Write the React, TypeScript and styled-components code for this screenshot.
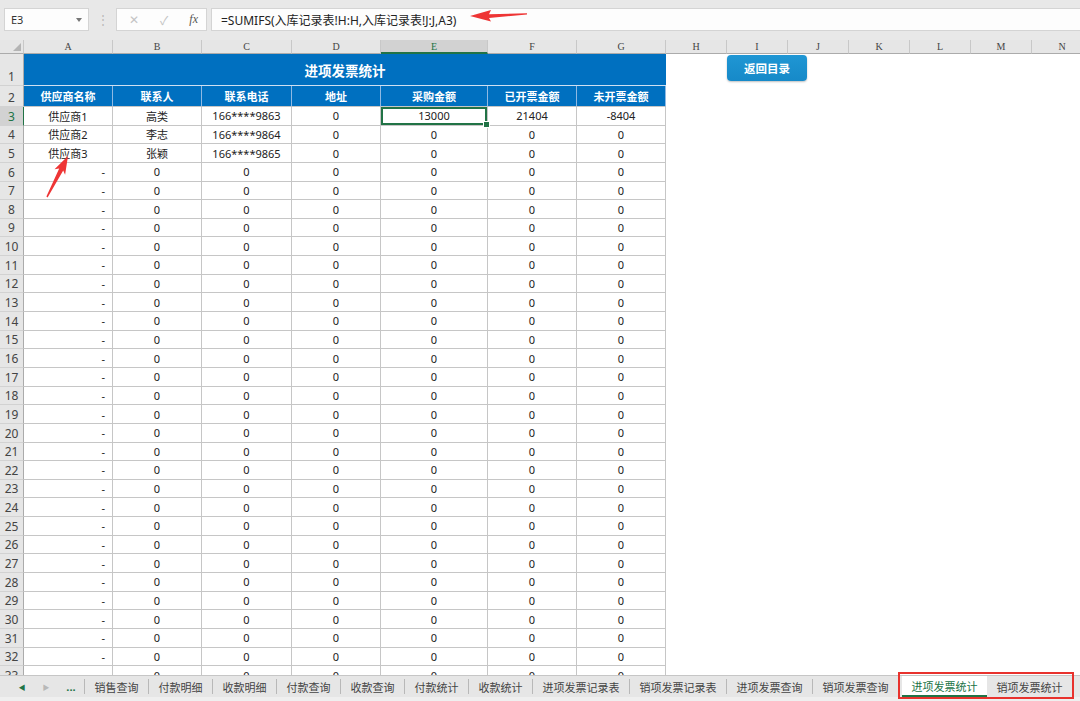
import React from "react";
import styled, { createGlobalStyle, css } from "styled-components";

const COLS = [24, 89, 89, 90, 89, 107, 89, 89, 61, 61, 61, 61, 61, 61, 61];
const LETTERS = ["A", "B", "C", "D", "E", "F", "G", "H", "I", "J", "K", "L", "M", "N"];
const TABLE_COLS = 7;
const ROW_H = 18.65;
const GREEN = "#217346";
const BLUE = "#0070c0";

const HEADERS = ["供应商名称", "联系人", "联系电话", "地址", "采购金额", "已开票金额", "未开票金额"];

const rows: string[][] = [
    ["供应商1", "高类", "166****9863", "0", "13000", "21404", "-8404"],
    ["供应商2", "李志", "166****9864", "0", "0", "0", "0"],
    ["供应商3", "张颖", "166****9865", "0", "0", "0", "0"],
];
for (let i = 6; i <= 33; i++) rows.push(["-", "0", "0", "0", "0", "0", "0"]);

const tabs = [
    "销售查询",
    "付款明细",
    "收款明细",
    "付款查询",
    "收款查询",
    "付款统计",
    "收款统计",
    "进项发票记录表",
    "销项发票记录表",
    "进项发票查询",
    "销项发票查询",
    "进项发票统计",
    "销项发票统计",
];
const ACTIVE_TAB = "进项发票统计";

const GlobalStyle = createGlobalStyle`
    html, body {
        margin: 0;
        padding: 0;
        background: #fff;
    }
    body {
        font-family: "Noto Sans", "Noto Sans CJK SC", sans-serif;
        color: #222;
    }
`;

export default function App() {
    return (
        <>
            <GlobalStyle />
            <Page>
                <Toolbar>
                    <NameBox>
                        <span>E3</span>
                        <DropArrow />
                    </NameBox>
                    <Grip>⋮</Grip>
                    <FxBox>
                        <FxIcon $dim>✕</FxIcon>
                        <FxIcon $dim>✓</FxIcon>
                        <FxLabel>fx</FxLabel>
                    </FxBox>
                    <FormulaBox>=SUMIFS(入库记录表!H:H,入库记录表!J:J,A3)</FormulaBox>
                </Toolbar>

                <Sheet>
                    <GridRow $h={14}>
                        <Corner>
                            <CornerMark />
                        </Corner>
                        {LETTERS.map((l) => (
                            <ColHead key={l} $selected={l === "E"}>
                                {l}
                            </ColHead>
                        ))}
                    </GridRow>

                    <GridRow $h={32}>
                        <RowHead>1</RowHead>
                        <TitleCell>进项发票统计</TitleCell>
                        {LETTERS.slice(TABLE_COLS).map((l) => (
                            <Cell key={l} $variant="empty" />
                        ))}
                    </GridRow>

                    <GridRow $h={21}>
                        <RowHead>2</RowHead>
                        {HEADERS.map((h) => (
                            <HeadCell key={h}>{h}</HeadCell>
                        ))}
                        {LETTERS.slice(TABLE_COLS).map((l) => (
                            <Cell key={l} $variant="empty" />
                        ))}
                    </GridRow>

                    {rows.map((r, i) => {
                        const n = i + 3;
                        return (
                            <GridRow key={n} $h={ROW_H}>
                                <RowHead $selected={n === 3}>{n}</RowHead>
                                {r.map((v, c) => (
                                    <Cell
                                        key={c}
                                        $variant="data"
                                        $align={c === 0 && v === "-" ? "right" : "center"}
                                        $active={n === 3 && c === 4}
                                    >
                                        {v}
                                        {n === 3 && c === 4 && <FillHandle />}
                                    </Cell>
                                ))}
                                {LETTERS.slice(TABLE_COLS).map((l) => (
                                    <Cell key={l} $variant="empty" />
                                ))}
                            </GridRow>
                        );
                    })}

                    <BackButton>返回目录</BackButton>
                </Sheet>

                <TabBar>
                    <Nav $on>◀</Nav>
                    <Nav>▶</Nav>
                    <More>...</More>
                    {tabs.map((t) => (
                        <Tab key={t} $active={t === ACTIVE_TAB}>
                            {t}
                        </Tab>
                    ))}
                </TabBar>

                <Marks width="1080" height="701" viewBox="0 0 1080 701">
                    <polygon
                        points="470,16 491,10 489,14.2 527,13.2 527,14.6 489,18 491,21.5"
                        fill="#ee3535"
                    />
                    <polygon
                        points="68,156 65.1,174.7 63.2,170.4 47.6,197.4 46.4,196.6 59.2,168.4 54.5,169.3"
                        fill="#ee3535"
                    />
                    <rect x="899" y="673" width="174" height="25" fill="none" stroke="#e8322d" strokeWidth="2" />
                </Marks>
            </Page>
        </>
    );
}

const Page = styled.div`
    position: relative;
    width: 1080px;
    height: 701px;
    overflow: hidden;
    display: flex;
    flex-direction: column;
    background: #fff;
`;

const Toolbar = styled.div`
    height: 40px;
    flex: none;
    box-sizing: border-box;
    padding: 8px 0 0 4px;
    display: flex;
    align-items: flex-start;
    background: #e8e8e8;
`;

const boxBase = css`
    height: 23px;
    box-sizing: border-box;
    background: #fdfdfd;
    border: 1px solid #d4d4d4;
    display: flex;
    align-items: center;
`;

const NameBox = styled.div`
    ${boxBase};
    width: 85px;
    padding: 0 6px;
    justify-content: space-between;
    font-size: 11px;
    color: #333;
`;

const DropArrow = styled.span`
    width: 0;
    height: 0;
    border-left: 3.5px solid transparent;
    border-right: 3.5px solid transparent;
    border-top: 4px solid #777;
`;

const Grip = styled.div`
    width: 27px;
    height: 23px;
    display: flex;
    align-items: center;
    justify-content: center;
    color: #b8b8b8;
    font-size: 12px;
`;

const FxBox = styled.div`
    ${boxBase};
    width: 91px;
    padding: 0 8px 0 12px;
    justify-content: space-between;
`;

const FxIcon = styled.span<{ $dim?: boolean }>`
    font-size: 12px;
    color: ${(p) => (p.$dim ? "#c4c4c4" : "#555")};
`;

const FxLabel = styled.span`
    font-family: "Liberation Serif", serif;
    font-style: italic;
    font-size: 12px;
    color: #555;
`;

const FormulaBox = styled.div`
    ${boxBase};
    flex: 1;
    margin-left: 4px;
    border-right: none;
    padding-left: 9px;
    font-size: 12px;
    color: #222;
`;

const Sheet = styled.div`
    position: relative;
    flex: 1;
    overflow: hidden;
`;

const GridRow = styled.div<{ $h: number }>`
    display: grid;
    grid-template-columns: ${COLS.map((w) => `${w}px`).join(" ")};
    height: ${(p) => p.$h}px;
`;

const Corner = styled.div`
    position: relative;
    background: #e6e6e6;
    box-sizing: border-box;
    border-right: 1px solid #c8c8c8;
    border-bottom: 1px solid #ababab;
`;

const CornerMark = styled.span`
    position: absolute;
    right: 2px;
    bottom: 2px;
    width: 0;
    height: 0;
    border-left: 8px solid transparent;
    border-bottom: 8px solid #b4b4b4;
`;

const ColHead = styled.div<{ $selected?: boolean }>`
    box-sizing: border-box;
    display: flex;
    align-items: center;
    justify-content: center;
    font-family: "Liberation Serif", serif;
    font-size: 10px;
    color: ${(p) => (p.$selected ? GREEN : "#444")};
    background: ${(p) => (p.$selected ? "#d2d2d2" : "#e6e6e6")};
    border-right: 1px solid #c8c8c8;
    border-bottom: ${(p) => (p.$selected ? `2px solid ${GREEN}` : "1px solid #ababab")};
`;

const RowHead = styled.div<{ $selected?: boolean }>`
    box-sizing: border-box;
    display: flex;
    align-items: flex-end;
    justify-content: center;
    padding-bottom: 1px;
    font-size: 12px;
    line-height: 14px;
    color: ${(p) => (p.$selected ? GREEN : "#444")};
    background: ${(p) => (p.$selected ? "#d2d2d2" : "#e6e6e6")};
    border-right: 1px solid ${(p) => (p.$selected ? GREEN : "#ababab")};
    border-bottom: 1px solid #d2d2d2;
`;

const TitleCell = styled.div`
    grid-column: span 7;
    box-sizing: border-box;
    display: flex;
    align-items: center;
    justify-content: center;
    background: ${BLUE};
    color: #fff;
    font-weight: 700;
    font-size: 13.5px;
    border-bottom: 1px solid #cfe0f2;
`;

const HeadCell = styled.div`
    box-sizing: border-box;
    display: flex;
    align-items: center;
    justify-content: center;
    background: ${BLUE};
    color: #fff;
    font-weight: 700;
    font-size: 11px;
    border-right: 1px solid #8fb9e3;
    border-bottom: 1px solid #c6c6c6;
`;

const Cell = styled.div<{ $variant: "data" | "empty"; $align?: "center" | "right"; $active?: boolean }>`
    position: relative;
    box-sizing: border-box;
    display: flex;
    align-items: center;
    justify-content: ${(p) => (p.$align === "right" ? "flex-end" : "center")};
    padding-right: ${(p) => (p.$align === "right" ? "7px" : "0")};
    font-size: 11px;
    color: #222;
    white-space: nowrap;
    ${(p) =>
        p.$variant === "data" &&
        css`
            border-right: 1px solid #c6c6c6;
            border-bottom: 1px solid #c6c6c6;
        `}
    ${(p) =>
        p.$active &&
        css`
            box-shadow: inset 0 0 0 2px ${GREEN};
        `}
`;

const FillHandle = styled.span`
    position: absolute;
    right: -3px;
    bottom: -3px;
    width: 5px;
    height: 5px;
    background: ${GREEN};
    border: 1px solid #fff;
    z-index: 2;
`;

const BackButton = styled.div`
    position: absolute;
    left: 727px;
    top: 15px;
    width: 80px;
    height: 26px;
    border-radius: 4px;
    background: linear-gradient(#1f96d4, #1689c8);
    box-shadow: 0 1px 2px rgba(0, 0, 0, 0.25);
    color: #fff;
    font-weight: 700;
    font-size: 11.5px;
    display: flex;
    align-items: center;
    justify-content: center;
`;

const TabBar = styled.div`
    height: 26px;
    flex: none;
    box-sizing: border-box;
    border-top: 1px solid #c6c6c6;
    background: #e6e6e6;
    display: flex;
    align-items: stretch;
    padding: 0 0 4px 10px;
    box-shadow: inset 0 -4px 0 #efefef;
`;

const Nav = styled.div<{ $on?: boolean }>`
    width: 24px;
    display: flex;
    align-items: center;
    justify-content: center;
    font-size: 7px;
    color: ${(p) => (p.$on ? GREEN : "#b8b8b8")};
`;

const More = styled.div`
    width: 26px;
    display: flex;
    align-items: center;
    justify-content: center;
    font-weight: 700;
    font-size: 11px;
    color: ${GREEN};
    border-right: 1px solid #b8b8b8;
    margin: 3px 0;
`;

const Tab = styled.div<{ $active?: boolean }>`
    box-sizing: border-box;
    display: flex;
    align-items: center;
    padding: 0 9.5px;
    font-size: 11px;
    white-space: nowrap;
    color: ${(p) => (p.$active ? GREEN : "#444")};
    ${(p) =>
        p.$active
            ? css`
                  background: #fff;
                  border-bottom: 2px solid ${GREEN};
                  margin: 0 0 0 3px;
              `
            : css`
                  border-right: 1px solid #b8b8b8;
                  margin: 3px 0;
              `}
`;

const Marks = styled.svg`
    position: absolute;
    left: 0;
    top: 0;
    pointer-events: none;
`;
